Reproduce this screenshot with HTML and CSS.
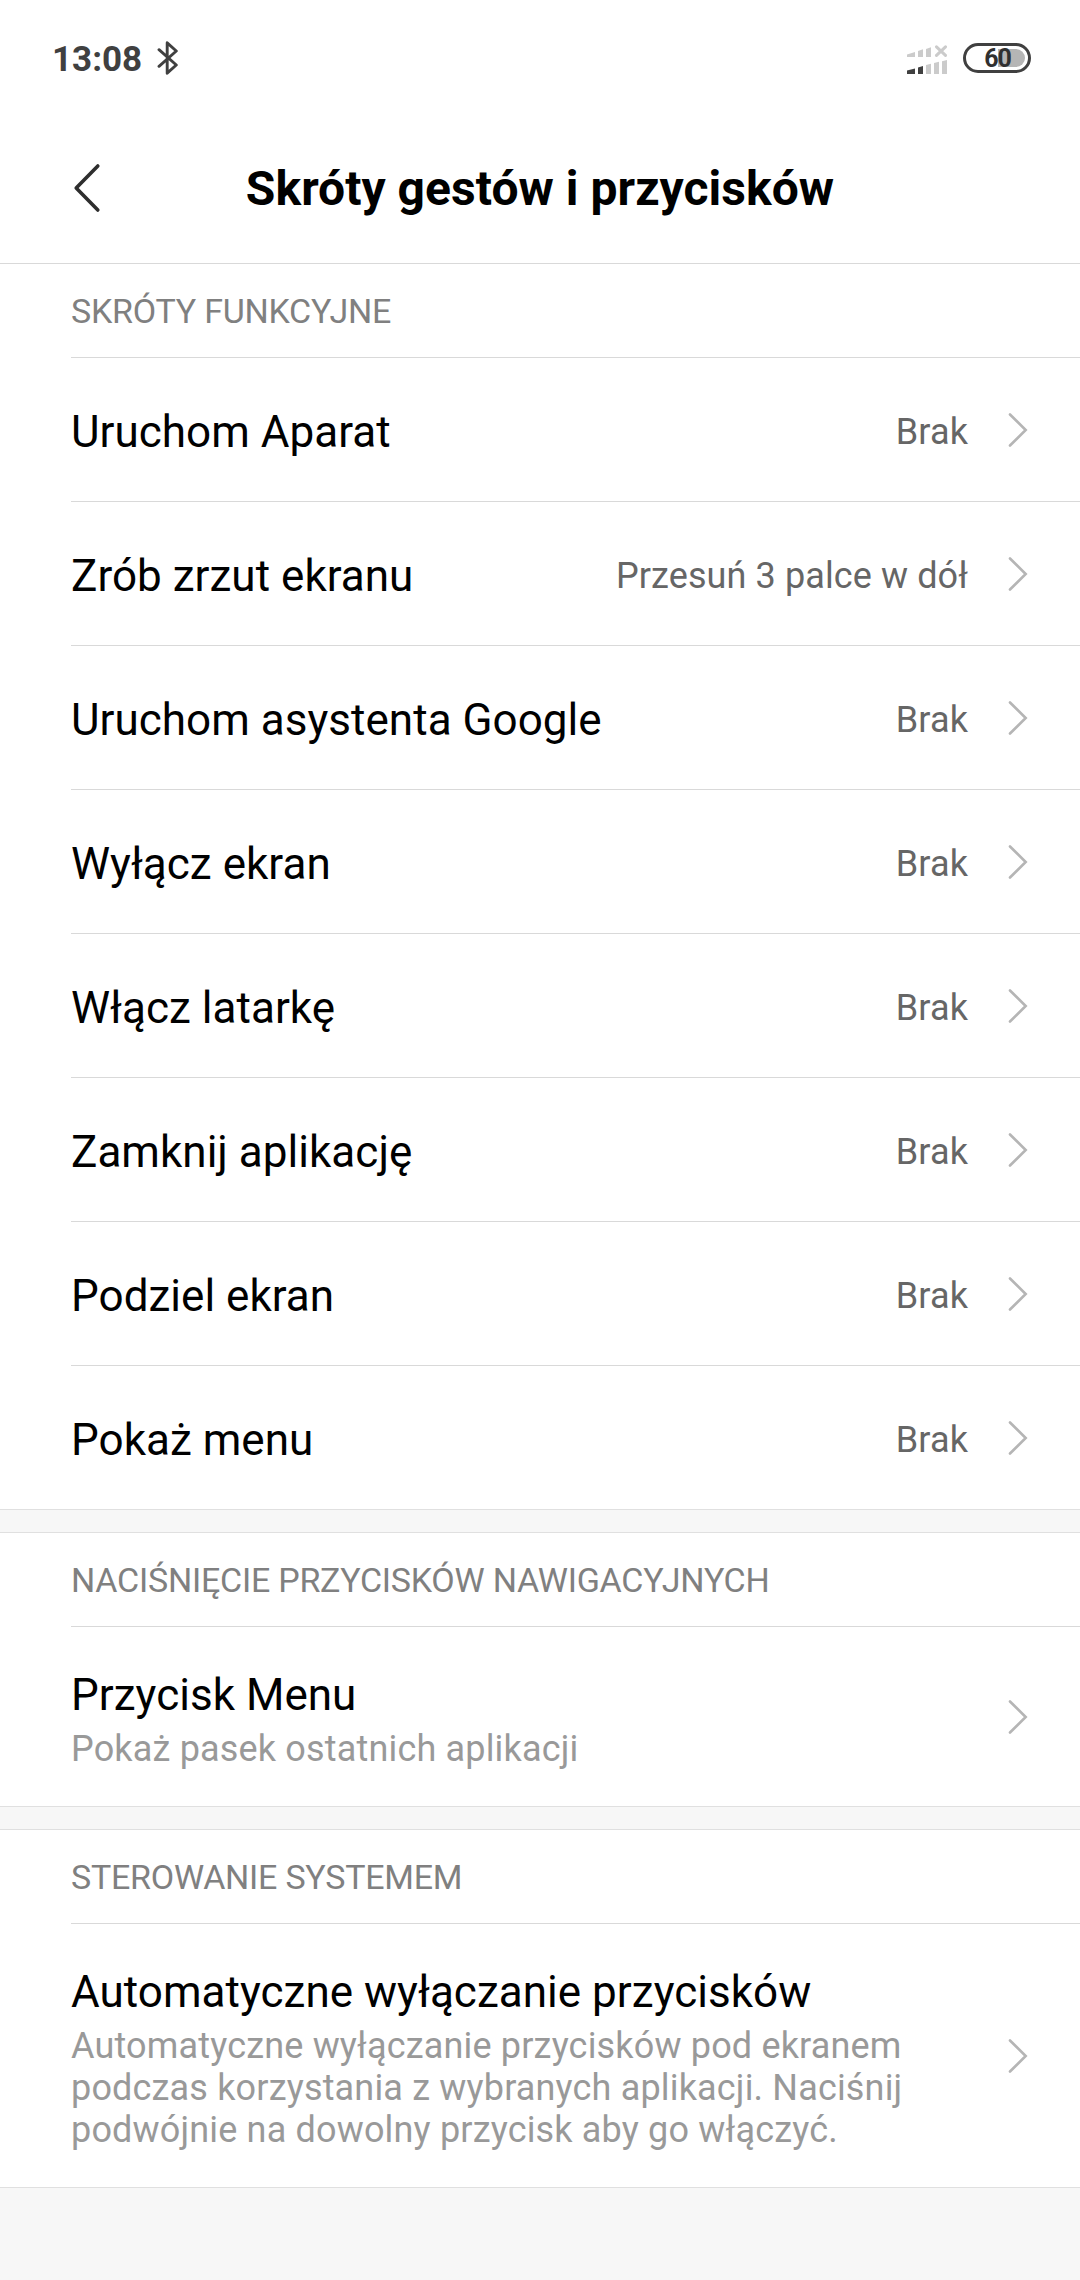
FILE: index.html
```html
<!DOCTYPE html>
<html lang="pl">
<head>
    <meta charset="UTF-8">
    <meta name="viewport" content="width=device-width, initial-scale=1.0">
    <title>Skróty gestów i przycisków</title>
    <link rel="stylesheet" href="styles.css">
</head>
<body>
    <!-- chevron shared by all rows -->
    <svg width="0" height="0" class="defs">
        <symbol id="chevron" viewBox="0 0 20 36">
            <path d="M2 2.5L17.7 18L2 33.5" fill="none" stroke="#b5b5b5" stroke-width="2.6" stroke-linecap="round"/>
        </symbol>
    </svg>

    <div class="status">
        <span class="clock">13:08</span>
        <svg class="bluetooth" width="22" height="36" viewBox="0 0 22 36">
            <path d="M2 9.7L19.3 25L10.2 33.2V2.8L19.3 11L2 26.3" fill="none" stroke="#404040" stroke-width="2.9" stroke-linecap="round" stroke-linejoin="round"/>
        </svg>
        <svg class="signal" width="40" height="30" viewBox="0 0 40 30">
            <g fill="#cbcbcb">
                <path d="M0 9.5L8 7V12H0zM11 6L16 4.3V12H11zM19 4L24 2.3V12H19z"/>
                <path d="M19 20L24 18.7V29H19zM27 18L32 16.7V29H27zM35 16.3L40 15V29H35z"/>
            </g>
            <path d="M29.5 1.8L38.5 10.4M38.5 1.8L29.5 10.4" stroke="#cbcbcb" stroke-width="3" stroke-linecap="round"/>
            <path d="M0 25.5L8 23.5V29H0zM11 22.5L16 21V29H11z" fill="#404040"/>
        </svg>
        <div class="battery"><div class="level"></div><span>60</span></div>
    </div>

    <div class="header">
        <svg class="back" width="28" height="50" viewBox="0 0 28 50">
            <path d="M24.8 3L3.2 25L24.8 47" fill="none" stroke="#2e2e2e" stroke-width="3.6" stroke-linecap="round" stroke-linejoin="round"/>
        </svg>
        <h1>Skróty gestów i przycisków</h1>
    </div>

    <div class="section">
        <h2>SKRÓTY FUNKCYJNE</h2>
        <div class="row">
            <div class="title">Uruchom Aparat</div>
            <div class="value">Brak</div>
            <svg class="arrow"><use href="#chevron"/></svg>
        </div>
        <div class="row">
            <div class="title">Zrób zrzut ekranu</div>
            <div class="value">Przesuń 3 palce w dół</div>
            <svg class="arrow"><use href="#chevron"/></svg>
        </div>
        <div class="row">
            <div class="title">Uruchom asystenta Google</div>
            <div class="value">Brak</div>
            <svg class="arrow"><use href="#chevron"/></svg>
        </div>
        <div class="row">
            <div class="title">Wyłącz ekran</div>
            <div class="value">Brak</div>
            <svg class="arrow"><use href="#chevron"/></svg>
        </div>
        <div class="row">
            <div class="title">Włącz latarkę</div>
            <div class="value">Brak</div>
            <svg class="arrow"><use href="#chevron"/></svg>
        </div>
        <div class="row">
            <div class="title">Zamknij aplikację</div>
            <div class="value">Brak</div>
            <svg class="arrow"><use href="#chevron"/></svg>
        </div>
        <div class="row">
            <div class="title">Podziel ekran</div>
            <div class="value">Brak</div>
            <svg class="arrow"><use href="#chevron"/></svg>
        </div>
        <div class="row">
            <div class="title">Pokaż menu</div>
            <div class="value">Brak</div>
            <svg class="arrow"><use href="#chevron"/></svg>
        </div>
    </div>

    <div class="section">
        <h2>NACIŚNIĘCIE PRZYCISKÓW NAWIGACYJNYCH</h2>
        <div class="row medium">
            <div class="text">
                <div class="title">Przycisk Menu</div>
                <div class="sub">Pokaż pasek ostatnich aplikacji</div>
            </div>
            <svg class="arrow"><use href="#chevron"/></svg>
        </div>
    </div>

    <div class="section">
        <h2>STEROWANIE SYSTEMEM</h2>
        <div class="row large">
            <div class="text">
                <div class="title">Automatyczne wyłączanie przycisków</div>
                <div class="sub">Automatyczne wyłączanie przycisków pod ekranem<br>podczas korzystania z wybranych aplikacji. Naciśnij<br>podwójnie na dowolny przycisk aby go włączyć.</div>
            </div>
            <svg class="arrow"><use href="#chevron"/></svg>
        </div>
    </div>
</body>
</html>
```
FILE: styles.css
```css
* {
    box-sizing: border-box;
}
html, body {
    margin: 0;
    height: 100%;
    overflow: hidden;
    background-color: #f7f7f7;
}
body {
    font-family: Roboto, sans-serif;
    color: #000;
}
.defs {
    display: block;
}

/* status bar */
.status {
    display: flex;
    align-items: center;
    height: 116px;
    padding: 0 49px 0 52px;
    background: #fff;
}
.clock {
    padding-top: 3px;
    font-size: 35px;
    font-weight: 700;
    line-height: 40px;
    color: #404040;
    margin-right: 15px;
}
.signal {
    margin-top: 4px;
    margin-left: auto;
    margin-right: 16px;
}
.battery {
    position: relative;
    width: 68px;
    height: 30px;
    border: 3px solid #404040;
    border-radius: 15px;
    text-align: center;
}
.battery .level {
    position: absolute;
    top: 3px;
    right: 3px;
    width: 27px;
    height: 18px;
    border-radius: 0 9px 9px 0;
    background: #b5b5b5;
}
.battery span {
    position: relative;
    display: block;
    padding-left: 1px;
    font-size: 25px;
    font-weight: 700;
    line-height: 25px;
    letter-spacing: -1px;
    color: #303030;
}

/* title bar */
.header {
    display: grid;
    grid-template-columns: 168px 1fr 168px;
    align-items: center;
    height: 148px;
    padding-bottom: 4px;
    background: #fff;
    border-bottom: 1px solid #d9d9d9;
}
.back {
    margin-left: 73px;
}
h1 {
    margin: 0;
    padding-top: 2px;
    font-size: 48px;
    font-weight: 700;
    line-height: 56px;
    letter-spacing: 0.04px;
    text-align: center;
    white-space: nowrap;
}

.section {
    background: #fff;
    border-bottom: 1px solid #e0e0e0;
}
.section + .section {
    margin-top: 22px;
    border-top: 1px solid #e0e0e0;
}
h2 {
    margin: 0 0 0 71px;
    height: 94px;
    padding-top: 3px;
    font-size: 34px;
    font-weight: 400;
    line-height: 88px;
    letter-spacing: -0.24px;
    color: #808080;
    border-bottom: 1px solid #d9d9d9;
}
.row {
    display: flex;
    align-items: center;
    height: 144px;
    margin-left: 71px;
    padding-right: 52px;
    border-bottom: 1px solid #d9d9d9;
}
.row:last-child {
    height: 143px;
    border-bottom: none;
}
.row.medium {
    height: 179px;
}
.row.large {
    height: 263px;
}
.title {
    padding-top: 5px;
    font-size: 44px;
    line-height: 52px;
    letter-spacing: 0.03px;
    white-space: nowrap;
}
.value {
    margin-left: auto;
    padding-top: 4px;
    font-size: 36px;
    line-height: 42px;
    letter-spacing: 0.1px;
    color: #666;
}
.sub {
    margin-top: 7px;
    font-size: 36px;
    line-height: 42px;
    letter-spacing: 0.17px;
    color: #999;
    white-space: nowrap;
}
.arrow {
    flex: none;
    width: 20px;
    height: 36px;
    margin-left: 40px;
}
.text + .arrow {
    margin-left: auto;
}
```
